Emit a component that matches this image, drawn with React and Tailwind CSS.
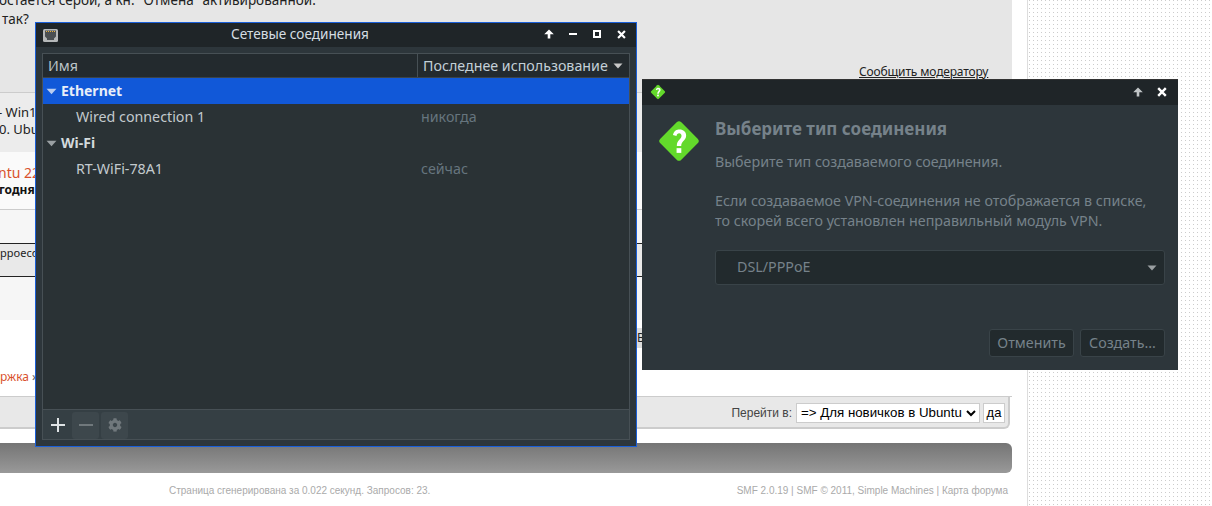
import { FaCog } from 'react-icons/fa';

const ArrowUp = ({ className }) => (
    <svg viewBox="0 0 10 10" className={className} fill="currentColor">
        <path d="M5 0.5 9.8 5.2H6.3V9.5H3.7V5.2H0.2Z" />
    </svg>
);

const CloseIcon = ({ className }) => (
    <svg viewBox="0 0 10 10" className={className} fill="none" stroke="currentColor" strokeWidth="2.4">
        <path d="M1.2 1.2 8.8 8.8M8.8 1.2 1.2 8.8" />
    </svg>
);

const Triangle = ({ className }) => (
    <svg viewBox="0 0 10 6" className={className} fill="currentColor">
        <path d="M0.5 0.5H9.5L5 5.5Z" />
    </svg>
);

const QuestionDiamond = ({ className }) => (
    <svg viewBox="0 0 40 40" className={className}>
        <rect x="6.5" y="6.5" width="27" height="27" rx="3" transform="rotate(45 20 20)" fill="#63d92b" />
        <path d="M14.5 14.5C15.5 10.5 18 9.5 20.5 9.5 24 9.5 26.5 11.8 26.5 15 26.5 19.5 22 20 22 24.5H18C18 19 22.3 18.3 22.3 15.2 22.3 13.9 21.4 13 20.2 13 18.8 13 18 14 17.7 15.5Z" fill="#fff" />
        <rect x="17.8" y="26.5" width="4.3" height="4.3" fill="#fff" />
    </svg>
);

const EthernetIcon = () => (
    <svg viewBox="0 0 15 13" className="w-[15px] h-[13px]">
        <rect width="15" height="13" rx="1.5" fill="#b5b8b9" />
        <path d="M2 1.5H13V7.5L11 9.5V11H4V9.5L2 7.5Z" fill="#4a4f52" />
        <path d="M3 2.5H12" stroke="#e9b23a" strokeWidth="1" strokeDasharray="1 1" />
    </svg>
);

const TitleButton = ({ children }) => (
    <div className="w-[24px] flex items-center justify-center text-white">{children}</div>
);

const TreeGroup = ({ label, selected }) => (
    <div className={`h-[26px] flex items-center pl-[3px] gap-[4px] font-bold text-[14px] ${selected ? 'bg-[#1158d8] text-[#e8eef8]' : 'text-[#d3dadd]'}`}>
        <Triangle className={`w-[11px] h-[7px] ${selected ? 'text-[#b9cdf0]' : 'text-[#9aa0a3]'}`} />
        <span className="-mt-[2px]">{label}</span>
    </div>
);

const TreeRow = ({ name, last }) => (
    <div className="h-[26px] flex items-center text-[14.25px]">
        <div className="w-[378px] pl-[33px] text-[#c3cace]">{name}</div>
        <div className="text-[#66757e]">{last}</div>
    </div>
);

const ForumBackground = () => (
    <div className="flex h-[506px] bg-white font-['Liberation_Sans',sans-serif]">
        <div className="w-[1012px] flex flex-col overflow-hidden">
            <div className="h-[92px] bg-[#e6e6e6] font-['Noto_Sans',sans-serif] text-[#222] flex flex-col relative">
                <div className="-mt-[10px] -ml-[1px] text-[13.5px] leading-[20px] whitespace-nowrap">остается серой, а кн. "Отмена" активированной.</div>
                <div className="ml-[2px] text-[13.5px] leading-[18px]">так?</div>
                <div className="absolute left-[859px] top-[63px] text-[12px] tracking-[-0.15px] underline leading-[18px]">Сообщить модератору</div>
            </div>
            <div className="h-[60px] bg-[#ececec] border-t border-[#ccc] font-['Noto_Sans',sans-serif] text-[13px] text-[#222] leading-[17px] pt-[11px] whitespace-nowrap">
                <div className="-ml-[2px]">- Win10</div>
                <div className="-ml-[1px]">0. Ubuntu</div>
            </div>
            <div className="h-[58px] bg-[#fafafa] border-b border-[#ccc] font-['Noto_Sans',sans-serif] whitespace-nowrap pt-[12px]">
                <div className="text-[14px] leading-[18px] text-[#d9512c] -ml-[2px]">ntu 22</div>
                <div className="text-[12px] leading-[16px] font-bold text-[#111] -ml-[1px]">годня</div>
            </div>
            <div className="h-[34px] bg-[#f6f6f6] border-b border-[#222]" />
            <div className="h-[33px] bg-[#e9e9e9] border-b border-[#222] flex items-start pt-[1px] font-['Noto_Sans',sans-serif] text-[11px] text-[#222] whitespace-nowrap">ppoecom</div>
            <div className="h-[43px] bg-[#f6f6f6]" />
            <div className="h-[77px] bg-white border-b border-[#ccc] flex items-end pb-[10px] font-['Noto_Sans',sans-serif] text-[12px] text-[#d9512c] whitespace-nowrap">
                ржка&nbsp;<span className="text-[#555]">»</span>
            </div>
            <div className="h-[32px] mr-[2px] bg-[#e8e8e8] border-b-2 border-r-2 border-[#ccc] rounded-br-md flex items-center justify-end pr-[3px] pt-[1px] text-[12px] text-[#444]">
                <span className="mr-[4px]">Перейти в:</span>
                <select className="w-[184px] h-[20px] bg-white border border-[#ccc] text-[13.3px] text-black">
                    <option>=&gt; Для новичков в Ubuntu</option>
                </select>
                <span className="ml-[3px] w-[22px] h-[20px] bg-white border border-[#ccc] text-[13px] text-black flex items-center justify-center">да</span>
            </div>
            <div className="mt-[14px] h-[30px] rounded-r-md bg-gradient-to-b from-[#757575] to-[#999]" />
            <div className="h-[33px] flex items-center justify-between pl-[169px] pr-[4px] pt-[1px] text-[10px] text-[#aaa]">
                <span>Страница сгенерирована за 0.022 секунд. Запросов: 23.</span>
                <span>SMF 2.0.19 | SMF © 2011, Simple Machines | Карта форума</span>
            </div>
        </div>
        <div className="w-[16px] border-r border-[#ddd]" />
        <div className="flex-1 bg-[radial-gradient(circle_at_1.5px_0.5px,#ccc_0.8px,transparent_0.9px)] bg-[size:4px_4px]" />
    </div>
);

const ConnectionsWindow = () => (
    <div className="absolute left-[35px] top-[22px] w-[602px] h-[425px] border border-[#1a5fd8] bg-[#2d363b] flex flex-col font-['Noto_Sans',sans-serif]">
        <div className="h-[24px] bg-[#1f2528] flex items-center pl-[7px] pr-[3px]">
            <EthernetIcon />
            <div className="flex-1 text-center text-[13.6px] text-[#d5dde2] pl-[5px] -mt-[2px]">Сетевые соединения</div>
            <div className="flex items-center -mt-[2px]">
                <TitleButton><ArrowUp className="w-[10px] h-[10px]" /></TitleButton>
                <TitleButton><div className="w-[8px] h-[2px] bg-white" /></TitleButton>
                <TitleButton><div className="w-[8px] h-[8px] border-2 border-white" /></TitleButton>
                <TitleButton><CloseIcon className="w-[9px] h-[9px]" /></TitleButton>
            </div>
        </div>
        <div className="flex-1 mx-[6px] mt-[6px] mb-[6px] border border-[#475055] flex flex-col">
            <div className="h-[24px] bg-[#232a2e] border-b border-[#3c4448] flex items-center text-[14.25px] text-[#bcc4c8]">
                <div className="w-[375px] pl-[5px] h-full flex items-center border-r border-[#475055]">Имя</div>
                <div className="flex-1 pl-[5px] flex items-center gap-[5px] text-[#c3d0d8]">
                    Последнее использование
                    <Triangle className="w-[10px] h-[6px] text-[#c8c8c8]" />
                </div>
            </div>
            <div className="flex-1 bg-[#2a3235]">
                <TreeGroup label="Ethernet" selected />
                <TreeRow name="Wired connection 1" last="никогда" />
                <TreeGroup label="Wi-Fi" />
                <TreeRow name="RT-WiFi-78A1" last="сейчас" />
            </div>
            <div className="h-[30px] bg-[#353f44] border-t border-[#475055] flex items-center pt-[1px]">
                <div className="w-[29px] h-[27px] flex items-center justify-center">
                    <div className="relative w-[14px] h-[14px]">
                        <div className="absolute left-0 top-[6px] w-[14px] h-[2px] bg-[#dfe3e5]" />
                        <div className="absolute left-[6px] top-0 w-[2px] h-[14px] bg-[#dfe3e5]" />
                    </div>
                </div>
                <div className="w-[27px] h-[27px] rounded-[3px] bg-[#3d474c] flex items-center justify-center">
                    <div className="w-[14px] h-[2px] bg-[#70787c]" />
                </div>
                <div className="ml-[2px] w-[27px] h-[27px] rounded-[3px] bg-[#3d474c] flex items-center justify-center">
                    <FaCog className="w-[14px] h-[14px] text-[#70787c]" />
                </div>
            </div>
        </div>
    </div>
);

const ConnectionTypeDialog = () => (
    <div className="absolute left-[642px] top-[79px] w-[536px] h-[291px] bg-[#2d363b] flex flex-col font-['Noto_Sans',sans-serif] text-[14.27px] text-[#76828a]">
        <div className="h-[26px] bg-[#1f2528] flex items-center pl-[8px] pr-[11px] pb-[1px] border-t border-[#333]">
            <QuestionDiamond className="w-[16px] h-[16px]" />
            <div className="flex-1" />
            <ArrowUp className="w-[10px] h-[10px] text-[#c0c4c6]" />
            <CloseIcon className="w-[10px] h-[10px] text-white ml-[14px]" />
        </div>
        <div className="flex flex-1 pl-[15px] pr-[13px]">
            <QuestionDiamond className="w-[44px] h-[44px] mt-[14px] shrink-0" />
            <div className="flex-1 ml-[14px] flex flex-col">
                <div className="mt-[14px] font-bold text-[17px] leading-[20px]">Выберите тип соединения</div>
                <div className="mt-[13px] leading-[20px]">Выберите тип создаваемого соединения.</div>
                <div className="mt-[19px] leading-[20px]">Если создаваемое VPN-соединения не отображается в списке,<br />то скорей всего установлен неправильный модуль VPN.</div>
                <div className="mt-[19px] h-[35px] rounded-[3px] bg-[#222a2d] border border-[#394348] flex items-center pl-[21px] pr-[7px]">
                    <span className="flex-1 -mt-[2px]">DSL/PPPoE</span>
                    <Triangle className="w-[10px] h-[6px] text-[#9a9fa2]" />
                </div>
                <div className="mt-[44px] flex justify-end gap-[6px]">
                    <div className="w-[85px] h-[28px] rounded-[3px] bg-[#222a2d] border border-[#394348] flex items-center justify-center">Отменить</div>
                    <div className="w-[85px] h-[28px] rounded-[3px] bg-[#222a2d] border border-[#394348] flex items-center justify-center">Создать...</div>
                </div>
            </div>
        </div>
    </div>
);

const App = () => {
    return (
        <div className="relative w-[1212px] h-[506px] overflow-hidden">
            <ForumBackground />
            <div className="absolute left-[637px] top-[328px] w-[5px] h-[20px] bg-[#ddd] flex items-center text-[12px] text-[#222] overflow-hidden font-['Noto_Sans',sans-serif]">В</div>
            <ConnectionsWindow />
            <ConnectionTypeDialog />
        </div>
    );
};

export default App;
